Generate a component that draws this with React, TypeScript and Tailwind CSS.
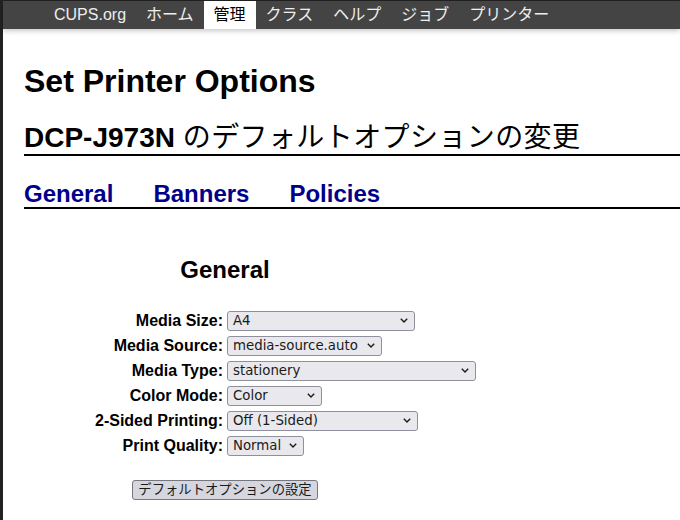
const navItems = ["CUPS.org", "ホーム", "管理", "クラス", "ヘルプ", "ジョブ", "プリンター"];

const options = [
  { label: "Media Size:", value: "A4", width: "w-[188px]" },
  { label: "Media Source:", value: "media-source.auto", width: "w-[155px]" },
  { label: "Media Type:", value: "stationery", width: "w-[249px]" },
  { label: "Color Mode:", value: "Color", width: "w-[95px]" },
  { label: "2-Sided Printing:", value: "Off (1-Sided)", width: "w-[191px]" },
  { label: "Print Quality:", value: "Normal", width: "w-[77px]" },
];

const sans = "font-['Liberation_Sans','Noto_Sans_CJK_JP',sans-serif]";
const ctrl = "font-['DejaVu_Sans','Noto_Sans_CJK_JP',sans-serif]";

function Chevron() {
  return (
    <svg className="h-[5px] w-[8px] shrink-0" viewBox="0 0 8 5" fill="none" stroke="#1a1a1a" strokeWidth={1.4}>
      <path d="M0.8 0.8L4 4L7.2 0.8" />
    </svg>
  );
}

function FakeSelect({ value, width }: { value: string; width: string }) {
  return (
    <div
      className={`${width} ${ctrl} flex h-[20px] items-center justify-between rounded-[3px] border border-[#8f8f9d] bg-[#e9e9ed] pl-[5px] pr-[6px] text-[13.33px] leading-none text-[#1a1a1a]`}
    >
      <span>{value}</span>
      <Chevron />
    </div>
  );
}

export default function App() {
  return (
    <div className={`${sans} min-h-[520px] border-l-[3px] border-t border-[#222] bg-white text-black`}>
      <div className="relative z-10 flex h-[28px] bg-[#444] pl-[41px] shadow-[0_2px_5px_rgba(0,0,0,0.22)]">
        {navItems.map((item) => (
          <div
            key={item}
            className={`flex items-center px-[10px] text-[16px] leading-none ${
              item === "管理" ? "bg-white text-black" : "text-[#eee]"
            }`}
          >
            {item}
          </div>
        ))}
      </div>

      <div className="pl-[21px]">
        <h1 className="mt-[36px] text-[32px] font-bold leading-[32px]">Set Printer Options</h1>

        <h2 className="mt-[27px] border-b-2 border-black pb-[2px] text-[28px] font-bold leading-[28px]">
          DCP-J973N <span className="font-normal tracking-[0.4px]">のデフォルトオプションの変更</span>
        </h2>

        <div className="mt-[26px] flex gap-[40px] border-b-2 border-black pb-[1px] text-[24px] font-bold leading-[24px] text-[#00008b]">
          <span>General</span>
          <span>Banners</span>
          <span>Policies</span>
        </div>

        <h3 className="mt-[49px] w-[402px] text-center text-[24px] font-bold leading-[24px]">General</h3>

        <div className="mt-[26px] flex flex-col">
          {options.map((o) => (
            <div key={o.label} className="flex h-[25px] items-center gap-[4px]">
              <div className="w-[199px] text-right text-[16px] font-bold leading-none">{o.label}</div>
              <FakeSelect value={o.value} width={o.width} />
            </div>
          ))}
        </div>

        <div className="mt-[19px] w-[402px] text-center">
          <button
            className={`${ctrl} inline-flex h-[20px] items-center rounded-[3px] border border-[#76767f] bg-[#d6d6de] px-[5px] text-[13.33px] leading-none text-[#1a1a1a]`}
          >
            デフォルトオプションの設定
          </button>
        </div>
      </div>
    </div>
  );
}
